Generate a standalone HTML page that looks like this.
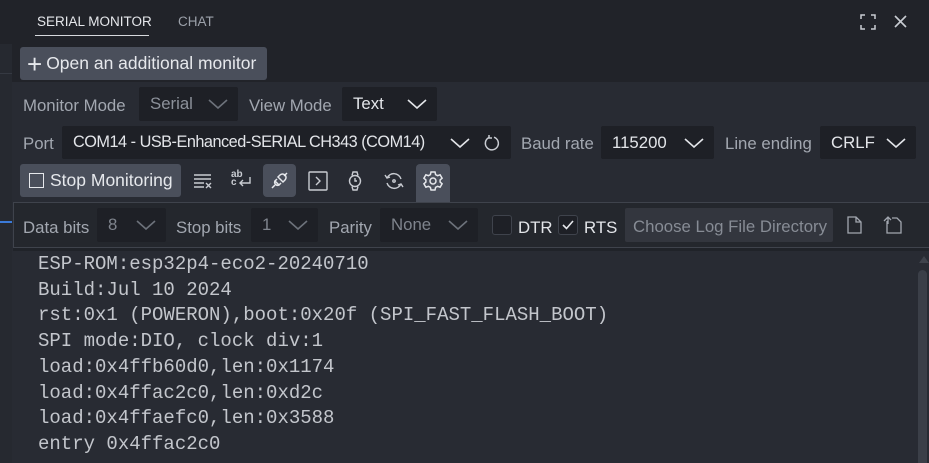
<!DOCTYPE html>
<html><head><meta charset="utf-8"><style>
*{box-sizing:border-box;margin:0;padding:0}
body{width:929px;height:463px;overflow:hidden;background:#282b33;font-family:"Liberation Sans",sans-serif;color:#c9ccd2;position:relative}
.abs{position:absolute}
.top{left:0;top:0;width:929px;height:82px;background:#212329}
.tab{top:14px;font-size:13.5px;letter-spacing:0}
.lstrip{left:0;top:44px;width:12px;height:419px;background:#262930}
.btn{background:#4a4f5b;border-radius:3px;color:#e6e8ec;font-size:17.5px;display:flex;align-items:center}
.lbl{font-size:16.8px;color:#a2a7b0}
.dd{background:#1e2026;border-radius:2px;font-size:16.8px;display:flex;align-items:center;padding-left:11px;color:#e3e5e9}
.dd svg{position:absolute;right:10px;top:50%;margin-top:-5px}
.mono{font-family:"Liberation Mono",monospace;font-size:19px;color:#c3c6cc;line-height:25.7px;left:38px;top:252px;white-space:pre}
</style></head><body>
<div class="abs top"></div>
<div class="abs lstrip"></div>
<div class="abs" style="left:0;top:73px;width:12px;height:1px;background:#353942"></div>
<div class="abs" style="left:0;top:221px;width:12px;height:2px;background:#3b7ad8"></div>
<div class="abs tab" style="left:37px;color:#e6e8ec">SERIAL MONITOR</div>
<div class="abs" style="left:35px;top:35px;width:114px;height:1px;background:#d7d9dd"></div>
<div class="abs tab" style="left:178px;color:#9ca1aa">CHAT</div>
<svg class="abs" style="left:859px;top:13px" width="18" height="18" viewBox="0 0 18 18" fill="none" stroke="#c9ccd2" stroke-width="1.5"><path d="M2 6V2h4M12 2h4v4M16 12v4h-4M6 16H2v-4"/></svg>
<svg class="abs" style="left:893px;top:14px" width="15" height="15" viewBox="0 0 15 15" stroke="#c9ccd2" stroke-width="1.6"><path d="M2 2l11 11M13 2L2 13"/></svg>

<div class="abs btn" style="left:20px;top:47px;width:247px;height:33px;padding-left:7px"><span style="font-size:26px;font-weight:300;margin-right:4px;line-height:1">+</span>Open an additional monitor</div>

<div class="abs lbl" style="left:23px;top:96px">Monitor Mode</div>
<div class="abs dd" style="left:139px;top:87px;width:99px;height:34px;color:#8c919a">Serial<svg width="20" height="10" viewBox="0 0 20 10" fill="none" stroke="#6d727b" stroke-width="1.6"><path d="M1 1l9 8 9-8"/></svg></div>
<div class="abs lbl" style="left:249px;top:96px">View Mode</div>
<div class="abs dd" style="left:342px;top:87px;width:95px;height:34px">Text<svg width="20" height="10" viewBox="0 0 20 10" fill="none" stroke="#e3e5e9" stroke-width="1.6"><path d="M1 1l9 8 9-8"/></svg></div>

<div class="abs lbl" style="left:23px;top:134px">Port</div>
<div class="abs dd" style="left:62px;top:126px;width:449px;height:33px"><span style="letter-spacing:-0.5px;font-size:16.3px">COM14 - USB-Enhanced-SERIAL CH343 (COM14)</span><svg style="right:41px" width="20" height="10" viewBox="0 0 20 10" fill="none" stroke="#e3e5e9" stroke-width="1.6"><path d="M1 1l9 8 9-8"/></svg>
<svg style="right:10px;margin-top:-9px" width="18" height="18" viewBox="0 0 18 18" fill="none" stroke="#c9ccd2" stroke-width="1.5"><path d="M11 3.2A6.5 6.5 0 1 1 6 3.5"/><path d="M6 1v3h3"/></svg></div>
<div class="abs lbl" style="left:521px;top:134px">Baud rate</div>
<div class="abs dd" style="left:601px;top:126px;width:113px;height:33px">115200<svg width="20" height="10" viewBox="0 0 20 10" fill="none" stroke="#e3e5e9" stroke-width="1.6"><path d="M1 1l9 8 9-8"/></svg></div>
<div class="abs lbl" style="left:725px;top:134px">Line ending</div>
<div class="abs dd" style="left:820px;top:126px;width:96px;height:33px">CRLF<svg width="20" height="10" viewBox="0 0 20 10" fill="none" stroke="#e3e5e9" stroke-width="1.6"><path d="M1 1l9 8 9-8"/></svg></div>

<div class="abs btn" style="left:20px;top:164px;width:161px;height:33px;padding-left:9px"><span style="display:inline-block;width:15px;height:15px;border:1.5px solid #e6e8ec;margin-right:6px"></span>Stop Monitoring</div>
<svg class="abs" style="left:193px;top:172px" width="20" height="18" viewBox="0 0 20 18" fill="none" stroke="#c9ccd2" stroke-width="1.4"><path d="M1 3h17M1 7h17M1 11h10M1 15h10M13 11l5 5M18 11l-5 5"/></svg>
<div class="abs" style="left:231px;top:171px;font-size:10px;line-height:8px;color:#c9ccd2;font-weight:bold">ab<br>c</div>
<svg class="abs" style="left:236px;top:176px" width="16" height="14" viewBox="0 0 16 14" fill="none" stroke="#c9ccd2" stroke-width="1.4"><path d="M14 1v6H4M7 4L4 7l3 3"/></svg>
<div class="abs" style="left:263px;top:164px;width:33px;height:33px;background:#4a4f5b;border-radius:4px"></div>
<svg class="abs" style="left:269px;top:170px" width="21" height="21" viewBox="0 0 21 21" fill="none" stroke="#e6e8ec" stroke-width="1.5"><path d="M3 18l3-3M18 3l-3 3M8 9l-2 2 4 4 2-2M9 7l5 5 2-2a2.5 2.5 0 0 0-5-5z"/><path d="M6 11a3 3 0 0 0 4 4"/></svg>
<svg class="abs" style="left:308px;top:171px" width="20" height="20" viewBox="0 0 20 20" fill="none" stroke="#c9ccd2" stroke-width="1.4"><rect x="1" y="1" width="18" height="18" rx="1"/><path d="M8 6l4 4-4 4"/></svg>
<svg class="abs" style="left:347px;top:170px" width="16" height="22" viewBox="0 0 16 22" fill="none" stroke="#c9ccd2" stroke-width="1.4"><circle cx="8" cy="11" r="5.5"/><path d="M8 8v3h2M5 5.5L6 2h4l1 3.5M5 16.5L6 20h4l1-3.5"/></svg>
<svg class="abs" style="left:384px;top:171px" width="20" height="20" viewBox="0 0 20 20" fill="none" stroke="#c9ccd2" stroke-width="1.4"><path d="M3 7a7.5 7.5 0 0 1 14 1M17 13a7.5 7.5 0 0 1-14-1M1 4l2 3 3-1M19 16l-2-3-3 1"/><circle cx="10" cy="10" r="1.2"/></svg>
<div class="abs" style="left:416px;top:164px;width:34px;height:40px;background:#4a4f5b;border-radius:4px 4px 0 0"></div>
<svg class="abs" style="left:422px;top:170px" width="22" height="22" viewBox="0 0 22 22" fill="none" stroke="#e6e8ec" stroke-width="1.5"><path d="M9 2h4l.6 2.6 2 1.1 2.5-.9 2 3.4-2 1.8v2l2 1.8-2 3.4-2.5-.9-2 1.1L13 20H9l-.6-2.6-2-1.1-2.5.9-2-3.4 2-1.8v-2l-2-1.8 2-3.4 2.5.9 2-1.1z"/><circle cx="11" cy="11" r="3"/></svg>

<div class="abs" style="left:13px;top:202px;width:916px;height:46px;border:1px solid #3f434c;border-right:none;background:#24272d"></div>
<div class="abs lbl" style="left:23px;top:218px">Data bits</div>
<div class="abs dd" style="left:97px;top:208px;width:69px;height:34px;color:#7f848d">8<svg width="20" height="10" viewBox="0 0 20 10" fill="none" stroke="#6d727b" stroke-width="1.6"><path d="M1 1l9 8 9-8"/></svg></div>
<div class="abs lbl" style="left:176px;top:218px">Stop bits</div>
<div class="abs dd" style="left:251px;top:208px;width:67px;height:34px;color:#7f848d">1<svg width="20" height="10" viewBox="0 0 20 10" fill="none" stroke="#6d727b" stroke-width="1.6"><path d="M1 1l9 8 9-8"/></svg></div>
<div class="abs lbl" style="left:329px;top:218px">Parity</div>
<div class="abs dd" style="left:380px;top:208px;width:98px;height:34px;color:#7f848d">None<svg width="20" height="10" viewBox="0 0 20 10" fill="none" stroke="#6d727b" stroke-width="1.6"><path d="M1 1l9 8 9-8"/></svg></div>
<div class="abs" style="left:492px;top:215px;width:20px;height:20px;border:1px solid #3f434c;border-radius:3px;background:#1e2026"></div>
<div class="abs" style="left:518px;top:218px;font-size:16.8px;color:#e3e5e9">DTR</div>
<div class="abs" style="left:558px;top:215px;width:20px;height:20px;border:1px solid #3f434c;border-radius:3px;background:#1e2026"></div>
<svg class="abs" style="left:562px;top:220px" width="12" height="10" viewBox="0 0 12 10" fill="none" stroke="#e6e8ec" stroke-width="1.6"><path d="M1 5l3.5 3.5L11 1"/></svg>
<div class="abs" style="left:584px;top:218px;font-size:16.8px;color:#e3e5e9">RTS</div>
<div class="abs" style="left:625px;top:208px;width:208px;height:34px;background:#33363e;border-radius:2px;font-size:16.8px;color:#878c95;padding:9px 0 0 8px;white-space:nowrap;overflow:hidden">Choose Log File Directory</div>
<svg class="abs" style="left:847px;top:216px" width="15" height="18" viewBox="0 0 15 18" fill="none" stroke="#a2a7b0" stroke-width="1.3"><path d="M1 1h8l5 5v11H1zM9 1v5h5"/></svg>
<svg class="abs" style="left:883px;top:216px" width="20" height="18" viewBox="0 0 20 18" fill="none" stroke="#a2a7b0" stroke-width="1.3"><path d="M4 5v12h14V6l-4-4H9M1 5l4-4 3 3M5 1v7"/></svg>

<div class="abs" style="left:13px;top:248px;width:916px;height:3px;background:#202329"></div>
<div class="abs mono">ESP-ROM:esp32p4-eco2-20240710
Build:Jul 10 2024
rst:0x1 (POWERON),boot:0x20f (SPI_FAST_FLASH_BOOT)
SPI mode:DIO, clock div:1
load:0x4ffb60d0,len:0x1174
load:0x4ffac2c0,len:0xd2c
load:0x4ffaefc0,len:0x3588
entry 0x4ffac2c0</div>
<div class="abs" style="left:919px;top:256px;width:0;height:0;border-left:5px solid transparent;border-right:5px solid transparent;border-bottom:7px solid #3f434c"></div>
<div class="abs" style="left:918px;top:270px;width:9px;height:193px;background:#3b3f48;border-radius:5px 5px 0 0"></div>
</body></html>
